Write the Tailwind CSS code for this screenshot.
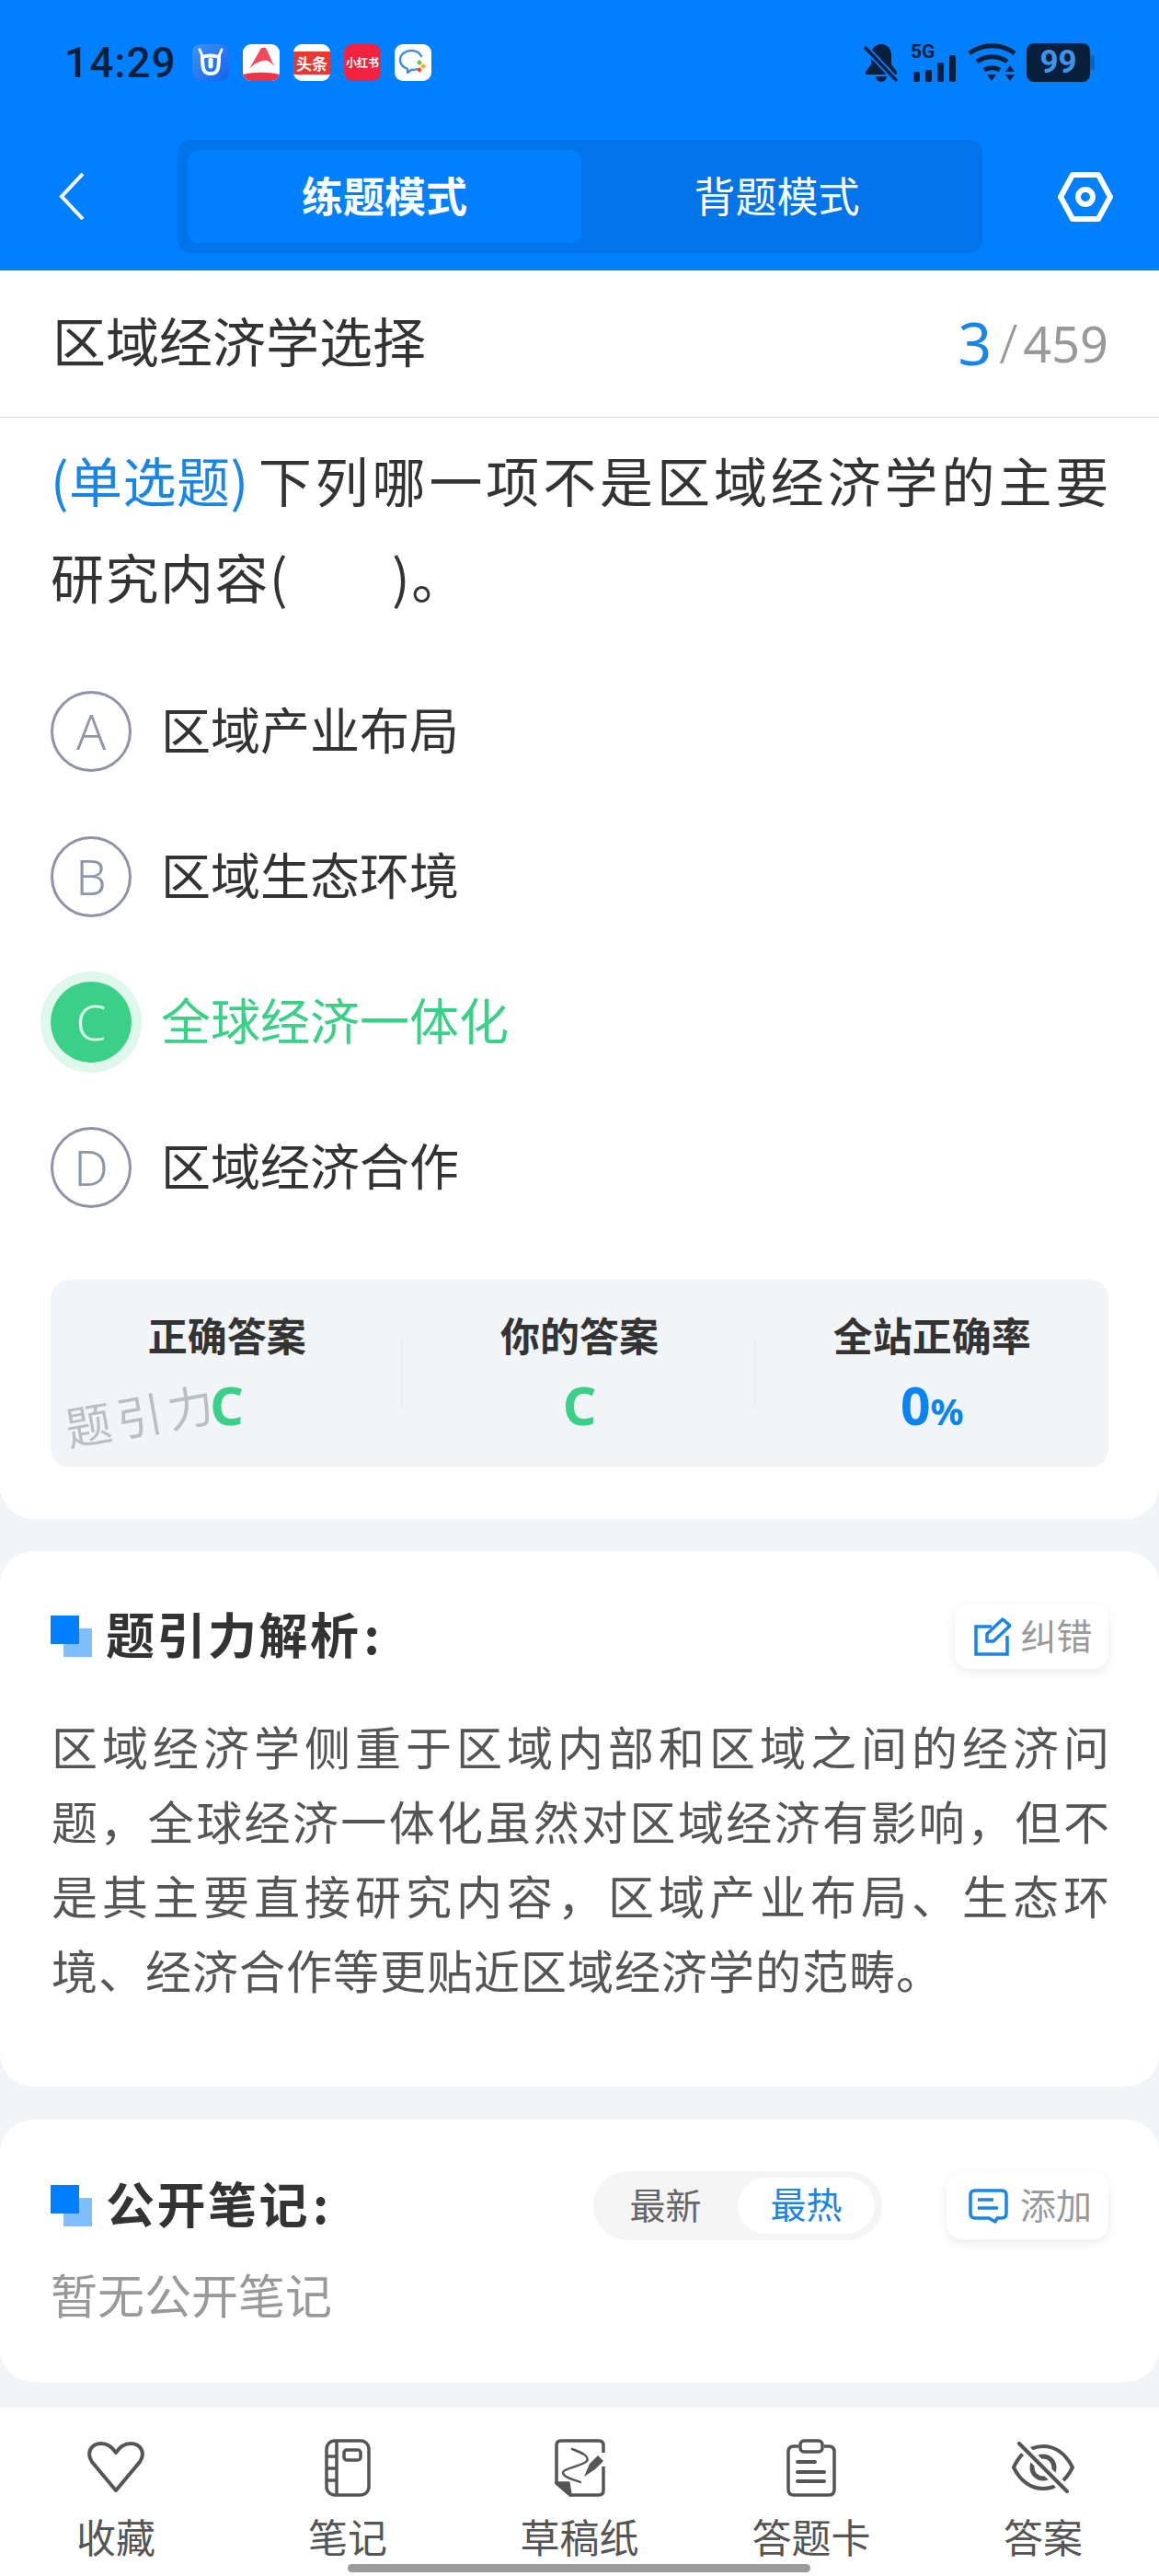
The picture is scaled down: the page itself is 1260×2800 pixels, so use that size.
<!DOCTYPE html>
<html lang="zh-CN">
<head>
    <meta charset="UTF-8">
    <meta name="viewport" content="width=device-width, initial-scale=1.0">
    <title>区域经济学选择</title>
    <script src="https://cdn.jsdelivr.net/npm/@tailwindcss/browser@4"></script>
</head>
<body class="bg-[#f2f5f8] font-['Noto_Sans_CJK_SC','Noto_Sans',sans-serif] text-[#333]">
    <div class="relative w-[1260px] h-[2800px] overflow-hidden mx-auto">

        <!-- Blue header -->
        <header class="bg-[#0080ff] h-[294px]">
            <div class="flex items-center h-[136px] pl-[70px] pr-[70px]">
                <span class="font-['Roboto',sans-serif] font-medium text-[46px] tracking-[1px] text-[#08203c] w-[139px]">14:29</span>
                <div class="flex gap-[15px]">
                    <svg class="w-[40px] h-[40px]" viewBox="0 0 40 40"><defs><linearGradient id="g1" x1="0" y1="0" x2="1" y2="1"><stop offset="0" stop-color="#3f92f5"/><stop offset="1" stop-color="#1463ea"/></linearGradient></defs><rect width="40" height="40" rx="9" fill="url(#g1)"/><path d="M11 14c0 15 2 18 9 18s9-3 9-18c-5-2-13-2-18 0Z" fill="none" stroke="#fff" stroke-width="4"/><path d="M20 17v7" stroke="#fff" stroke-width="5" stroke-linecap="round"/><path d="M8 6l3 7M32 6l-3 7" stroke="#fff" stroke-width="3" stroke-linecap="round"/></svg>
                    <svg class="w-[40px] h-[40px]" viewBox="0 0 40 40"><rect width="40" height="40" rx="9" fill="#fff"/><path d="M0 33c12-3 28-3 40 0v-2 0a9 9 0 0 1 0 0V31a9 9 0 0 1-9 9H9a9 9 0 0 1-9-9Z" fill="#ee3344"/><path d="M7 27 20 4h5l9 20c-5-6-8-7-12-6-6 1-11 4-15 9Z" fill="#f5485a"/></svg>
                    <div class="w-[40px] h-[40px] rounded-[9px] bg-white flex items-center overflow-hidden"><span class="w-full h-[25px] bg-[#e8382f] text-white text-[17px] leading-[25px] font-bold text-center whitespace-nowrap">头条</span></div>
                    <div class="w-[40px] h-[40px] rounded-[9px] bg-[#f4213f] flex items-center justify-center"><span class="text-white text-[12px] font-bold whitespace-nowrap">小红书</span></div>
                    <svg class="w-[40px] h-[40px]" viewBox="0 0 40 40"><rect width="40" height="40" rx="9" fill="#fff"/><path d="M25 27c-2 1-4 1-7 1l-4 3v-4C9 25 6 21 6 17 6 11 12 7 18 7c5 0 9 2 11 6" fill="none" stroke="#3d8edb" stroke-width="2.400" stroke-linecap="round" stroke-linejoin="round"/><path d="M27 17l3 3-3 3-3-3Z" fill="#6dbb4a"/><path d="M31 21l3 3-3 3-3-3Z" fill="#f5a623"/><path d="M27 25l3 3-3 3-3-3Z" fill="#e8503a"/></svg>
                </div>
                <div class="ml-auto flex items-center">
                    <svg class="w-[38px] h-[42px] mr-[13px]" viewBox="0 0 38 42" fill="#08203c"><path d="M19 1c-7 0-11 5-11 12v10l-6 8v3h34v-3l-6-8V13C30 6 26 1 19 1Z"/><path d="M13 36h12a6 6 0 0 1-12 0Z"/><path d="M1 4l35 37" stroke="#0080ff" stroke-width="7"/><path d="M1 4l35 37" stroke="#08203c" stroke-width="3.400"/></svg>
                    <div class="relative w-[50px] h-[42px] mr-[12px]">
                        <span class="absolute left-0 top-[1px] font-['Roboto',sans-serif] font-bold text-[21px] leading-[16px] text-[#08203c]">5G</span>
                        <div class="absolute bottom-0 left-[3px] flex items-end gap-[6px]">
                            <i class="block w-[7px] h-[11px] rounded-[2px] bg-[#08203c]"></i>
                            <i class="block w-[7px] h-[13px] rounded-[2px] bg-[#08203c]"></i>
                            <i class="block w-[7px] h-[21px] rounded-[2px] bg-[#08203c]"></i>
                            <i class="block w-[7px] h-[29px] rounded-[2px] bg-[#08203c]"></i>
                        </div>
                    </div>
                    <svg class="w-[53px] h-[42px] mr-[11px]" viewBox="0 0 53 42" fill="none" stroke="#08203c" stroke-width="5"><path d="M2 11c14-11 35-11 49 0"/><path d="M10 20c10-7 23-7 33 0"/><path d="M18 29c5-3 12-3 17 0"/><path d="M21 34h10l-5 7Z" fill="#08203c" stroke="none"/><path d="M46 24l5 7H41Z" fill="#08203c" stroke="none"/><path d="M41 34h10l-5 7Z" fill="#08203c" stroke="none"/></svg>
                    <div class="flex items-center">
                        <div class="w-[69px] h-[42px] rounded-[8px] bg-[#08203c] flex items-center justify-center font-['Roboto',sans-serif] font-bold text-[35px] text-[#3f94ea]">99</div>
                        <i class="block w-[5px] h-[16px] rounded-r-[3px] bg-[#0a62bd]"></i>
                    </div>
                </div>
            </div>
            <div class="flex items-center h-[123px] mt-[16px] pl-[64px] pr-[50px]">
                <svg class="w-[28px] h-[51px]" viewBox="0 0 28 51" fill="none" stroke="#fff" stroke-width="4"><path d="M26 1 3 25.500 26 50"/></svg>
                <div class="flex w-[875px] h-[123px] ml-[101px] p-[11px] bg-[#0074e8] rounded-[14px]">
                    <div class="w-[428px] rounded-[12px] bg-[#0080ff] flex items-center justify-center text-white text-[45px] font-bold pb-[3px]">练题模式</div>
                    <div class="flex-1 flex items-center justify-center text-white text-[45px] pb-[3px]">背题模式</div>
                </div>
                <svg class="w-[60px] h-[54px] ml-[82px]" viewBox="0 0 60 54" fill="none" stroke="#fff" stroke-width="6" stroke-linejoin="round"><path d="M16 3h28l13 24-13 24H16L3 27Z"/><circle cx="30" cy="27" r="8"/></svg>
            </div>
        </header>

        <!-- Title row -->
        <div class="flex items-center justify-between h-[160px] pl-[57px] pr-[55px] bg-white border-b border-[#dcdcdc]">
            <h1 class="text-[58px] font-normal text-[#333] pb-[8px]">区域经济学选择</h1>
            <div class="flex items-center text-[#999] font-['Noto_Sans',sans-serif] pb-[2px]">
                <span class="text-[64px] leading-none text-[#1a85e8] mr-[8px]">3</span>
                <span class="text-[58px] leading-none font-light mr-[6px]">/</span>
                <span class="text-[54px] leading-none">459</span>
            </div>
        </div>

        <!-- Question card -->
        <section class="relative bg-white rounded-b-[36px] pt-[17px] pb-[56px] px-[55px]">
            <p class="text-[58px] leading-[105px] whitespace-nowrap -translate-y-[2px]">
                <span class="block tracking-[3.900px]"><span class="text-[#1a85e8] tracking-[0.500px] mr-[10px]">(单选题)</span>下列哪一项不是区域经济学的主要</span>
                <span class="block tracking-[1.500px]">研究内容(<i class="inline-block w-[112px]"></i>)。</span>
            </p>

            <div class="mt-[35px]">
                <div class="flex items-center h-[158px]">
                    <span class="w-[88px] h-[88px] rounded-full border-[3px] border-[#8f93a8] flex items-center justify-center text-[53px] font-light text-[#8f96a8] font-['Noto_Sans',sans-serif]">A</span>
                    <span class="ml-[32px] text-[54px] pb-[7px]">区域产业布局</span>
                </div>
                <div class="flex items-center h-[158px]">
                    <span class="w-[88px] h-[88px] rounded-full border-[3px] border-[#8f93a8] flex items-center justify-center text-[53px] font-light text-[#8f96a8] font-['Noto_Sans',sans-serif]">B</span>
                    <span class="ml-[32px] text-[54px] pb-[7px]">区域生态环境</span>
                </div>
                <div class="flex items-center h-[158px]">
                    <span class="w-[88px] h-[88px] rounded-full bg-[#3ad087] ring-[11px] ring-[#e0f7ec] flex items-center justify-center text-[53px] font-light text-[#d9f8e8] font-['Noto_Sans',sans-serif]">C</span>
                    <span class="ml-[32px] text-[54px] text-[#3ad087] pb-[7px]">全球经济一体化</span>
                </div>
                <div class="flex items-center h-[158px]">
                    <span class="w-[88px] h-[88px] rounded-full border-[3px] border-[#8f93a8] flex items-center justify-center text-[53px] font-light text-[#8f96a8] font-['Noto_Sans',sans-serif]">D</span>
                    <span class="ml-[32px] text-[54px] pb-[7px]">区域经济合作</span>
                </div>
            </div>

            <div class="relative grid grid-cols-3 h-[204px] mt-[43px] rounded-[20px] bg-[#f2f5f8]">
                <div class="relative text-center pt-[35px]">
                    <div class="text-[43px] leading-[48px] font-bold">正确答案</div>
                    <div class="text-[57px] leading-[62px] mt-[22px] font-bold text-[#3ad087] font-['Noto_Sans',sans-serif]">C</div>
                    <i class="absolute right-0 top-[66px] w-[2px] h-[73px] bg-[#e9edf0]"></i>
                </div>
                <div class="relative text-center pt-[35px]">
                    <div class="text-[43px] leading-[48px] font-bold">你的答案</div>
                    <div class="text-[57px] leading-[62px] mt-[22px] font-bold text-[#3ad087] font-['Noto_Sans',sans-serif]">C</div>
                    <i class="absolute right-0 top-[66px] w-[2px] h-[73px] bg-[#e9edf0]"></i>
                </div>
                <div class="text-center pt-[35px]">
                    <div class="text-[43px] leading-[48px] font-bold">全站正确率</div>
                    <div class="text-[57px] leading-[62px] mt-[22px] font-bold text-[#0a84f5] font-['Noto_Sans',sans-serif]">0<span class="text-[40px]">%</span></div>
                </div>
                <!-- watermark -->
                <span class="absolute left-[15px] top-[115px] text-[50px] leading-[60px] tracking-[6px] text-[#bcbec1] -rotate-[10deg]">题引力</span>
            </div>
        </section>

        <!-- Analysis card -->
        <section class="mt-[35px] bg-white rounded-[36px] px-[55px] pt-[57px] pb-[83px]">
            <div class="flex items-center justify-between h-[71px]">
                <div class="flex items-center">
                    <div class="relative w-[45px] h-[45px]">
                        <i class="absolute right-0 bottom-0 w-[31px] h-[31px] bg-[#80bfff]"></i>
                        <i class="absolute left-0 top-0 w-[31px] h-[31px] bg-[#0080ff]"></i>
                    </div>
                    <h2 class="ml-[15px] text-[53px] tracking-[2.500px] font-bold pb-[6px]">题引力解析<span class="ml-[3px]">:</span></h2>
                </div>
                <div class="flex items-center justify-center w-[167px] h-[71px] pl-[4px] rounded-[16px] bg-white shadow-[0_4px_12px_rgba(0,0,0,0.08)] text-[39px] text-[#999]">
                    <svg class="w-[40px] h-[42px] mr-[10px]" viewBox="0 0 40 42" fill="none" stroke="#1a85e8" stroke-width="3.500"><path d="M19 10H2v30h34V20"/><path d="M14 26V18L31 2l8 7-18 17Z" stroke-linejoin="round"/></svg>
                    <span class="pb-[5px]">纠错</span>
                </div>
            </div>
            <p class="mt-[47px] text-[50px] leading-[81px] text-[#555] -translate-y-[4px] translate-x-[1px]">
                <span class="block whitespace-nowrap [text-align:justify] [text-align-last:justify]">区域经济学侧重于区域内部和区域之间的经济问</span>
                <span class="block whitespace-nowrap [text-align:justify] [text-align-last:justify]">题，全球经济一体化虽然对区域经济有影响，但不</span>
                <span class="block whitespace-nowrap [text-align:justify] [text-align-last:justify]">是其主要直接研究内容，区域产业布局、生态环</span>
                <span class="block whitespace-nowrap tracking-[1px]">境、经济合作等更贴近区域经济学的范畴。</span>
            </p>
        </section>

        <!-- Public notes card -->
        <section class="mt-[36px] bg-white rounded-[36px] px-[55px] pt-[56px] pb-[54px]">
            <div class="flex items-center h-[75px]">
                <div class="relative w-[45px] h-[45px]">
                    <i class="absolute right-0 bottom-0 w-[31px] h-[31px] bg-[#80bfff]"></i>
                    <i class="absolute left-0 top-0 w-[31px] h-[31px] bg-[#0080ff]"></i>
                </div>
                <h2 class="ml-[15px] text-[53px] tracking-[2.500px] font-bold pb-[5px]">公开笔记<span class="ml-[3px]">:</span></h2>
                <div class="flex items-center w-[314px] h-[75px] ml-auto mr-[70px] rounded-full bg-[#f5f5f5] pr-[8px] text-[39px]">
                    <span class="w-[157px] text-center text-[#666] pb-[4px]">最新</span>
                    <span class="w-[149px] h-[61px] leading-[54px] rounded-full bg-white text-center text-[#1a85e8]">最热</span>
                </div>
                <div class="flex items-center justify-center w-[176px] h-[73px] pl-[6px] rounded-[16px] bg-white shadow-[0_4px_12px_rgba(0,0,0,0.08)] text-[39px] text-[#999]">
                    <svg class="w-[43px] h-[38px] mr-[13px]" viewBox="0 0 43 38" fill="none" stroke="#1a85e8" stroke-width="3.500" stroke-linejoin="round"><path d="M7 2H36Q41 2 41 7V27Q41 32 36 32H31L29 36 22 32H7Q2 32 2 27V7Q2 2 7 2Z"/><path d="M10 12H27M10 21H32"/></svg>
                    <span class="pb-[5px]">添加</span>
                </div>
            </div>
            <p class="mt-[19px] text-[51px] leading-[81px] text-[#999] -translate-y-[1px]">暂无公开笔记</p>
        </section>

        <!-- Bottom nav -->
        <nav class="mt-[28px] grid grid-cols-5 h-[183px] bg-white text-[43px] leading-[60px] text-[#555] text-center">
            <div class="flex flex-col items-center pt-[33px]">
                <div class="flex items-center justify-center h-[64px]">
                    <svg class="w-[64px] h-[56px]" viewBox="0 0 64 56" fill="none" stroke="#555" stroke-width="4" stroke-linejoin="round"><path d="M32 53 6 22C-1 11 6 2 16 2c7 0 12 4 16 10 4-6 9-10 16-10 10 0 17 9 10 20Z"/></svg>
                </div>
                <span class="mt-[12px]">收藏</span>
            </div>
            <div class="flex flex-col items-center pt-[33px]">
                <div class="flex items-center justify-center h-[64px]">
                    <svg class="w-[50px] h-[63px]" viewBox="0 0 50 63" fill="none" stroke="#555" stroke-width="3.500"><rect x="2" y="2" width="46" height="59" rx="9"/><path d="M13 2v59M2 19h11M2 32h11M2 45h11"/><rect x="21" y="12" width="18" height="11" rx="3"/></svg>
                </div>
                <span class="mt-[12px]">笔记</span>
            </div>
            <div class="flex flex-col items-center pt-[33px]">
                <div class="flex items-center justify-center h-[64px]">
                    <svg class="w-[55px] h-[63px]" viewBox="0 0 55 63" fill="none" stroke="#555" stroke-width="3.500" stroke-linejoin="round"><path d="M53 15V7q0-5-5-5H7Q2 2 2 7v41l15 13h31q5 0 5-5V30"/><path d="M2 48H15L17 61Z" fill="#555"/><path d="M19 11C30 15 38 19 35 24 32 29 8 32 9 37 10 42 20 44 28 47" stroke-width="2.400" stroke-linecap="round"/><path d="M38 27 47 18 53 24 44 33 32 41Z" fill="#555" stroke="none"/></svg>
                </div>
                <span class="mt-[12px]">草稿纸</span>
            </div>
            <div class="flex flex-col items-center pt-[33px]">
                <div class="flex items-center justify-center h-[64px]">
                    <svg class="w-[54px] h-[63px]" viewBox="0 0 54 63" fill="none" stroke="#555" stroke-width="3.500"><path d="M13 8H8q-6 0-6 6v41q0 6 6 6h38q6 0 6-6V14q0-6-6-6h-5"/><rect x="15" y="2" width="24" height="12" rx="4"/><path d="M12 25h19M12 36h29M12 46h29" stroke-width="4" stroke-linecap="round"/></svg>
                </div>
                <span class="mt-[12px]">答题卡</span>
            </div>
            <div class="flex flex-col items-center pt-[33px]">
                <div class="flex items-center justify-center h-[64px]">
                    <svg class="w-[68px] h-[56px]" viewBox="0 0 68 56" fill="none" stroke="#555" stroke-width="4"><path d="M10 15C18 8 26 5 34 5c12 0 24 7 32 23-8 16-20 23-32 23S10 44 2 28c2-5 5-9 8-13Z"/><circle cx="34" cy="28" r="12" stroke-width="5"/><path d="M8 2 60 54" stroke="#fff" stroke-width="11"/><path d="M8 2 60 54" stroke-linecap="round"/></svg>
                </div>
                <span class="mt-[12px]">答案</span>
            </div>
        </nav>

        <!-- Gesture bar -->
        <div class="absolute left-[378px] bottom-[4px] w-[503px] h-[9px] rounded-full bg-[#9b9b9b]"></div>
    </div>
</body>
</html>
